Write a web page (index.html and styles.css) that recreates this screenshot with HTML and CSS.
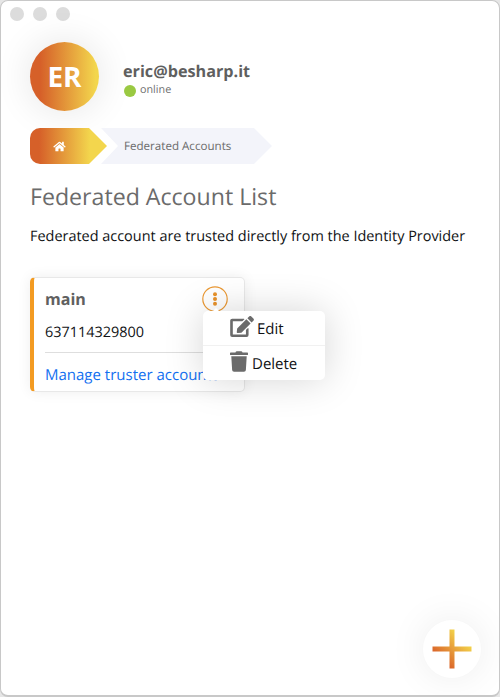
FILE: index.html
```html
<!DOCTYPE html>
<html lang="en">
<head>
<meta charset="utf-8">
<title>Federated Accounts</title>
<link rel="stylesheet" href="styles.css">
</head>
<body>
<div class="window">
  <div class="dots"><i></i><i></i><i></i></div>
  <header class="profile">
    <div class="avatar">ER</div>
    <div class="who">
      <div class="email">eric@besharp.it</div>
      <div class="status"><i></i><span>online</span></div>
    </div>
  </header>
  <nav class="crumbs">
    <a class="crumb home"><svg width="13" height="11" viewBox="0 0 576 512" fill="#fff"><path d="M280 148L96 300v164a16 16 0 0 0 16 16h112a16 16 0 0 0 16-16v-96a16 16 0 0 1 16-16h64a16 16 0 0 1 16 16v96a16 16 0 0 0 16 16h112a16 16 0 0 0 16-16V300L296 148a12 12 0 0 0-16 0zM572 251l-84-69V44a12 12 0 0 0-12-12h-56a12 12 0 0 0-12 12v72l-90-74a48 48 0 0 0-61 0L4 251a12 12 0 0 0-2 17l26 31a12 12 0 0 0 17 2l235-194a12 12 0 0 1 16 0l235 194a12 12 0 0 0 17-2l26-31a12 12 0 0 0-2-17z"/></svg></a>
    <a class="crumb page">Federated Accounts</a>
  </nav>
  <h1>Federated Account List</h1>
  <p class="intro">Federated account are trusted directly from the Identity Provider</p>
  <section class="card">
    <div class="card-head">
      <h2>main</h2>
      <svg class="more" width="26" height="26" viewBox="0 0 26 26"><circle cx="13" cy="13" r="12.2" fill="none" stroke="#eb9a35" stroke-width="1.2"/><g fill="#e8922b"><circle cx="13" cy="8.2" r="2"/><circle cx="13" cy="13" r="2"/><circle cx="13" cy="17.8" r="2"/></g></svg>
    </div>
    <div class="number">637114329800</div>
    <a class="manage">Manage truster accounts</a>
    <div class="menu">
      <a class="item edit"><svg width="24" height="21" viewBox="0 0 576 512" fill="#6b6b6b"><path d="M402 84l90 90a10 10 0 0 1 0 14L274 406l-93 10a20 20 0 0 1-21-21l10-93L388 84a10 10 0 0 1 14 0zm163-23l-49-49a39 39 0 0 0-55 0l-36 36a10 10 0 0 0 0 14l90 90a10 10 0 0 0 14 0l36-36a39 39 0 0 0 0-55zM384 346V448H64V128h230a12 12 0 0 0 8-4l40-40a12 12 0 0 0-8-20H48a48 48 0 0 0-48 48v352a48 48 0 0 0 48 48h352a48 48 0 0 0 48-48V306a12 12 0 0 0-20-8l-40 40a12 12 0 0 0-4 8z"/></svg><span>Edit</span></a>
      <a class="item delete"><svg width="18" height="21" viewBox="0 0 448 512" fill="#6b6b6b"><path d="M432 32H312l-9-19a24 24 0 0 0-22-13H167a24 24 0 0 0-22 13l-9 19H16A16 16 0 0 0 0 48v32a16 16 0 0 0 16 16h416a16 16 0 0 0 16-16V48a16 16 0 0 0-16-16zM32 128h384l-21 339a48 48 0 0 1-48 45H101a48 48 0 0 1-48-45z"/></svg><span>Delete</span></a>
    </div>
  </section>
  <button class="add"><svg width="40" height="40" viewBox="0 0 40 40"><defs><linearGradient id="plus" x1="0" y1="1" x2="1" y2="0"><stop offset=".2" stop-color="#d95f29"/><stop offset=".8" stop-color="#f4d84b"/></linearGradient></defs><path d="M17.5 .5h5v17h17v5h-17v17h-5v-17h-17v-5h17z" fill="url(#plus)"/></svg></button>
</div>
</body>
</html>
```
FILE: styles.css
```css
* { box-sizing: border-box; }
body {
  margin: 0;
  background: #e6e6e6;
  font-family: "Open Sans", sans-serif;
  text-rendering: geometricPrecision;
  color: #101214;
}
h1, h2, p { margin: 0; font-weight: 400; }
.window {
  position: relative;
  width: 500px;
  height: 697px;
  padding: 6px 29px 0;
  border: 1px solid #c8c8c8;
  border-bottom-width: 2px;
  border-radius: 8px;
  background: #fff;
  overflow: hidden;
}
.dots { display: flex; gap: 9px; margin-left: -20px; }
.dots i { width: 14px; height: 14px; border-radius: 50%; background: #dcdcdc; }
.profile { display: flex; margin-top: 21px; }
.avatar {
  width: 69px;
  height: 69px;
  border-radius: 50%;
  background: linear-gradient(90deg, #d66029 15%, #f3d64d 95%);
  box-shadow: 0 0 38px rgba(0, 0, 0, .11);
  color: #fff;
  font-size: 28px;
  font-weight: 700;
  line-height: 71px;
  text-align: center;
}
.who { margin: 17px 0 0 24px; }
.email { color: #5f5f5f; font-size: 16.2px; font-weight: 700; line-height: 24px; }
.status { display: flex; align-items: center; height: 13px; color: #707070; font-size: 10.8px; line-height: 13px; }
.status i { width: 12px; height: 12px; margin: 2px 4px 0 1px; border-radius: 50%; background: #9ac942; }
.crumbs { display: flex; height: 36px; margin-top: 17px; }
.crumb { display: flex; align-items: center; height: 36px; }
.home {
  width: 77px;
  padding-left: 23px;
  border-radius: 10px 0 0 10px;
  background: linear-gradient(90deg, #d66029 12%, #f3d64d 78%);
  clip-path: polygon(0 0, 59px 0, 100% 50%, 59px 100%, 0 100%);
}
.page {
  width: 171px;
  margin-left: -6px;
  padding-left: 23px;
  background: #f3f4fa;
  clip-path: polygon(0 0, 153px 0, 100% 50%, 153px 100%, 0 100%, 17px 50%);
  color: #6b6b6b;
  font-size: 11.6px;
}
h1 { margin-top: 16px; color: #6b6b6b; font-size: 23.15px; line-height: 32px; white-space: nowrap; }
.intro { margin-top: 14px; font-size: 14.45px; line-height: 22px; white-space: nowrap; }
.card {
  position: relative;
  width: 215px;
  height: 115px;
  margin-top: 29px;
  padding: 8px 16px 0 11px;
  border: 1px solid #e8e8e8;
  border-left: 4px solid #f39b22;
  border-radius: 5px;
  background: #fff;
  box-shadow: 0 0 14px rgba(0, 0, 0, .07);
}
.card-head { display: flex; justify-content: space-between; height: 26px; }
h2 { color: #606060; font-size: 16px; font-weight: 700; line-height: 26px; }
.number { height: 41px; border-bottom: 1px solid #dedede; font-size: 14.45px; line-height: 41px; }
.manage { display: block; color: #126ff0; font-size: 15px; line-height: 45px; white-space: nowrap; }
.menu {
  position: absolute;
  left: 169px;
  top: 33px;
  width: 122px;
  height: 69px;
  border-radius: 5px;
  background: #fff;
  box-shadow: 0 0 38px rgba(0, 0, 0, .17);
}
.menu::before {
  content: "";
  position: absolute;
  left: 9px;
  top: -3px;
  width: 8px;
  height: 4px;
  background: #fff;
  clip-path: polygon(50% 0, 100% 100%, 0 100%);
}
.item { display: flex; align-items: center; height: 34px; padding-left: 27px; font-size: 15px; }
.item svg { margin-top: -3px; }
.item span { padding-top: 2px; }
.edit { height: 35px; border-bottom: 1px solid #f1f1f1; }
.edit span { margin-left: 3px; }
.delete span { margin-left: 4px; }
.add {
  position: absolute;
  right: 18px;
  bottom: 17px;
  display: grid;
  place-items: center;
  width: 58px;
  height: 58px;
  padding: 0;
  border: 0;
  border-radius: 50%;
  background: #fff;
  box-shadow: 0 0 38px rgba(0, 0, 0, .08);
}
```
